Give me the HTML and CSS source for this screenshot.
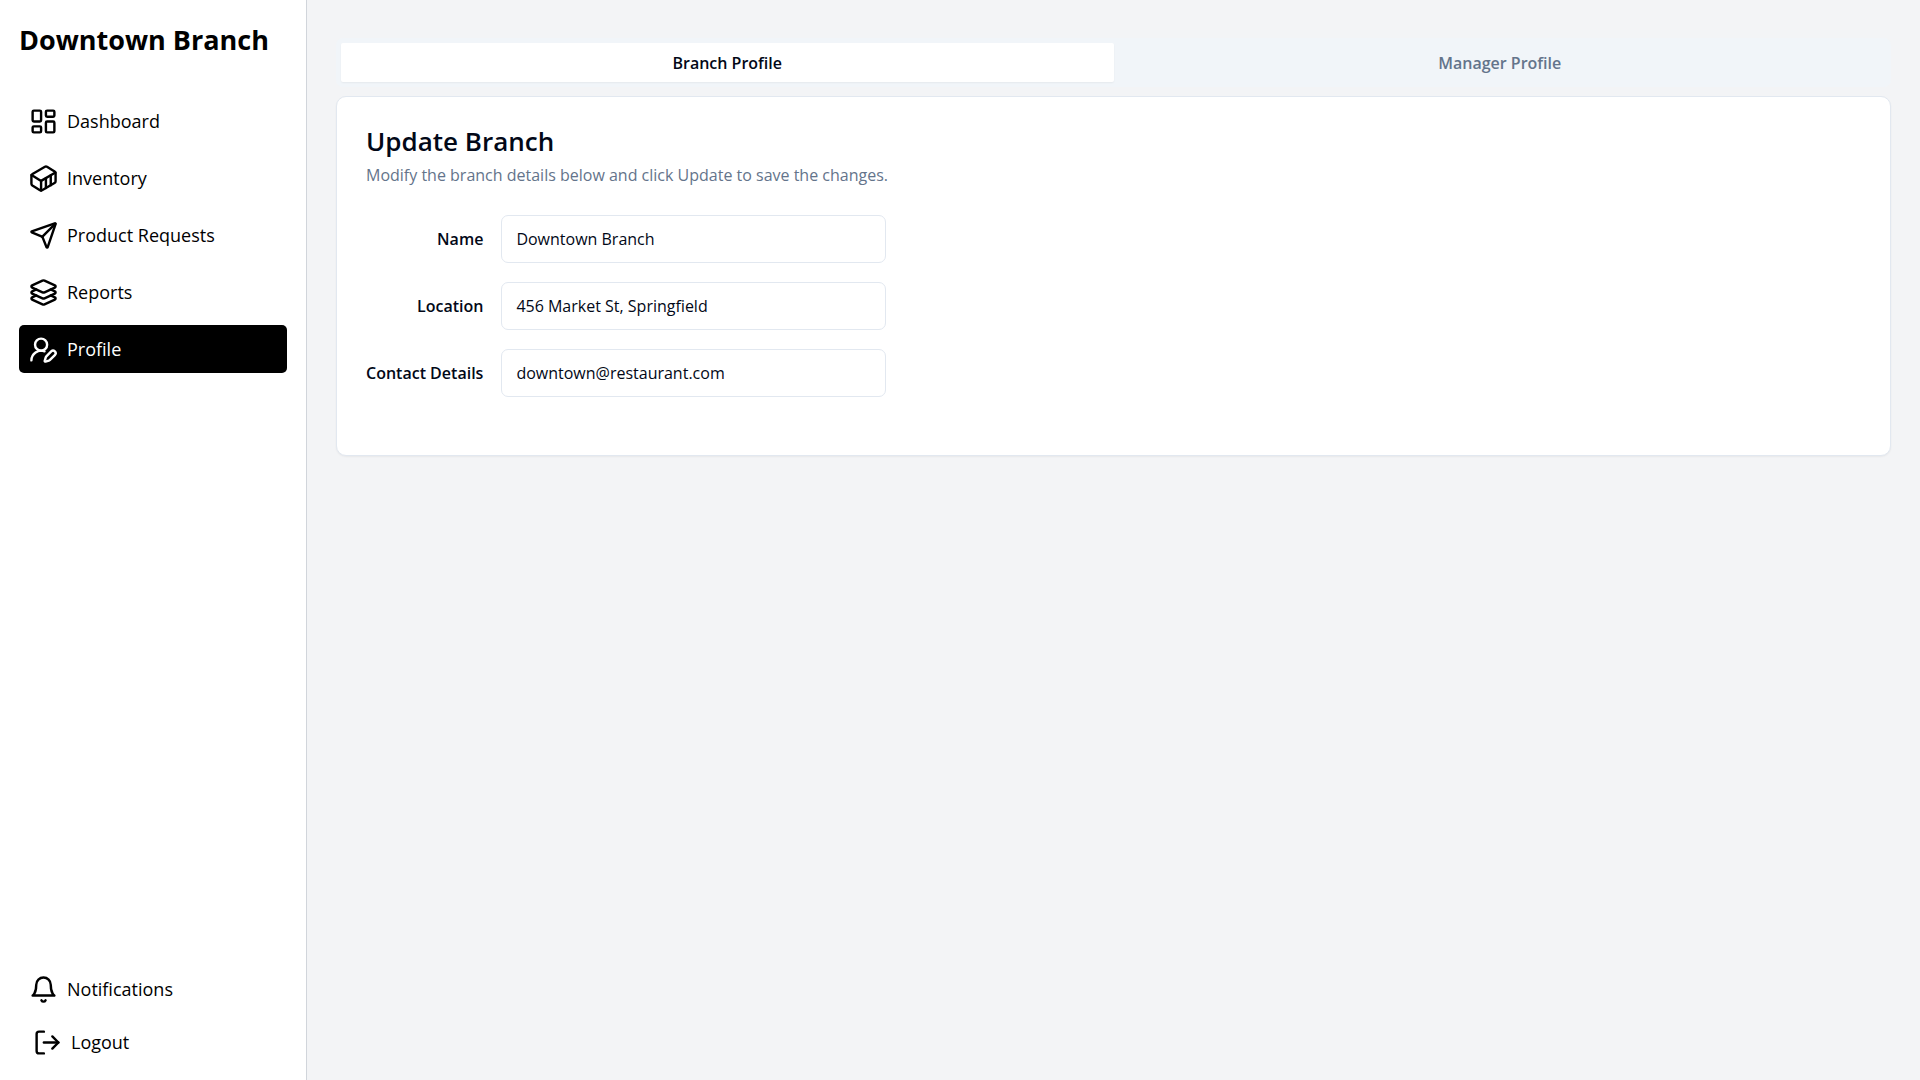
FILE: index.html
```html
<!DOCTYPE html>
<html lang="en">
<head>
<meta charset="utf-8">
<meta name="viewport" content="width=device-width, initial-scale=1">
<title>Downtown Branch</title>
<link rel="stylesheet" href="styles.css">
</head>
<body>
<div class="app">
  <aside class="sidebar">
    <h1 class="brand">Downtown Branch</h1>
    <nav class="nav">
      <a class="nav-link" href="#dashboard">
        <svg class="icon" viewBox="0 0 24 24" aria-hidden="true"><rect width="7" height="9" x="3" y="3" rx="1"/><rect width="7" height="5" x="14" y="3" rx="1"/><rect width="7" height="9" x="14" y="12" rx="1"/><rect width="7" height="5" x="3" y="16" rx="1"/></svg>
        Dashboard
      </a>
      <a class="nav-link" href="#inventory">
        <svg class="icon" viewBox="0 0 24 24" aria-hidden="true"><path d="M22 7.7c0-.6-.4-1.2-.8-1.5l-6.3-3.9a1.72 1.72 0 0 0-1.7 0l-10.3 6c-.5.2-.9.8-.9 1.4v6.6c0 .5.4 1.2.8 1.5l6.3 3.9a1.72 1.72 0 0 0 1.7 0l10.3-6c.5-.3.9-1 .9-1.5Z"/><path d="M10 21.9V14L2.1 9.1"/><path d="m10 14 11.9-6.9"/><path d="M14 19.8v-8.1"/><path d="M18 17.5V9.4"/></svg>
        Inventory
      </a>
      <a class="nav-link" href="#requests">
        <svg class="icon" viewBox="0 0 24 24" aria-hidden="true"><path d="M14.536 21.686a.5.5 0 0 0 .937-.024l6.5-19a.496.496 0 0 0-.635-.635l-19 6.5a.5.5 0 0 0-.024.937l7.93 3.18a2 2 0 0 1 1.112 1.11z"/><path d="m21.854 2.147-10.94 10.939"/></svg>
        Product Requests
      </a>
      <a class="nav-link" href="#reports">
        <svg class="icon" viewBox="0 0 24 24" aria-hidden="true"><path d="M12.83 2.18a2 2 0 0 0-1.66 0L2.6 6.08a1 1 0 0 0 0 1.83l8.58 3.91a2 2 0 0 0 1.66 0l8.58-3.9a1 1 0 0 0 0-1.83Z"/><path d="m6.08 9.5-3.5 1.6a1 1 0 0 0 0 1.81l8.6 3.91a2 2 0 0 0 1.65 0l8.58-3.9a1 1 0 0 0 0-1.83l-3.5-1.59"/><path d="m6.08 14.5-3.5 1.6a1 1 0 0 0 0 1.81l8.6 3.91a2 2 0 0 0 1.65 0l8.58-3.9a1 1 0 0 0 0-1.83l-3.5-1.59"/></svg>
        Reports
      </a>
      <a class="nav-link nav-link-active" href="#profile" aria-current="page">
        <svg class="icon" viewBox="0 0 24 24" aria-hidden="true"><path d="M2 21a8 8 0 0 1 10.821-7.487"/><path d="M21.378 16.626a1 1 0 0 0-3.004-3.004l-4.01 4.012a2 2 0 0 0-.506.854l-.837 2.87a.5.5 0 0 0 .62.62l2.87-.837a2 2 0 0 0 .854-.506z"/><circle cx="10" cy="8" r="5"/></svg>
        Profile
      </a>
    </nav>
    <div class="nav-footer">
      <a class="nav-link" href="#notifications">
        <svg class="icon" viewBox="0 0 24 24" aria-hidden="true"><path d="M6 8a6 6 0 0 1 12 0c0 7 3 9 3 9H3s3-2 3-9"/><path d="M10.3 21a1.94 1.94 0 0 0 3.4 0"/></svg>
        Notifications
      </a>
      <button class="logout" type="button">
        <svg class="icon" viewBox="0 0 24 24" aria-hidden="true"><path d="M9 21H5a2 2 0 0 1-2-2V5a2 2 0 0 1 2-2h4"/><path d="m16 17 5-5-5-5"/><path d="M21 12H9"/></svg>
        Logout
      </button>
    </div>
  </aside>
  <main class="main">
    <div class="tabs" role="tablist">
      <button class="tab tab-active" type="button" role="tab" aria-selected="true">Branch Profile</button>
      <button class="tab" type="button" role="tab" aria-selected="false">Manager Profile</button>
    </div>
    <section class="card">
      <h2 class="card-title">Update Branch</h2>
      <p class="card-text">Modify the branch details below and click Update to save the changes.</p>
      <form class="form">
        <label class="label" for="name">Name</label>
        <input class="input" id="name" type="text" value="Downtown Branch">
        <label class="label" for="location">Location</label>
        <input class="input" id="location" type="text" value="456 Market St, Springfield">
        <label class="label" for="contact">Contact Details</label>
        <input class="input" id="contact" type="text" value="downtown@restaurant.com">
      </form>
    </section>
  </main>
</div>
</body>
</html>
```
FILE: styles.css
```css
* {
  box-sizing: border-box;
}

body {
  margin: 0;
  background: #f3f4f6;
  color: #020817;
  font-family: "Open Sans", "Noto Sans", sans-serif;
}

button,
input {
  font: inherit;
  color: inherit;
}

.app {
  display: flex;
  min-height: 100vh;
}

.sidebar {
  display: flex;
  flex-direction: column;
  flex: none;
  width: 307px;
  padding: 19px 19px 14px;
  border-right: 1px solid #d1d5db;
  background: #fff;
  color: #000;
}

.brand {
  margin: 0 0 36px;
  font-size: 27px;
  font-weight: 700;
  line-height: 42px;
  white-space: nowrap;
}

.nav {
  display: flex;
  flex-direction: column;
  gap: 9px;
}

.nav-link,
.logout {
  display: flex;
  align-items: center;
  gap: 9px;
  height: 48px;
  padding: 0 10px;
  border-radius: 5px;
  color: inherit;
  font-size: 18px;
  line-height: 28px;
  text-decoration: none;
}

.nav-link-active {
  background: #000;
  color: #fff;
}

.nav-footer {
  display: flex;
  flex-direction: column;
  gap: 5px;
  margin-top: auto;
}

.logout {
  padding: 0 14px;
  border: 0;
  background: none;
}

.icon {
  flex: none;
  width: 29px;
  height: 29px;
  fill: none;
  stroke: currentColor;
  stroke-width: 2;
  stroke-linecap: round;
  stroke-linejoin: round;
}

.main {
  flex: 1;
  min-width: 0;
  padding: 38px 29px;
}

.tabs {
  display: grid;
  grid-template-columns: 1fr 1fr;
  margin-bottom: 9px;
  padding: 5px;
  border-radius: 7px;
  background: #f1f5f9;
}

.tab {
  height: 39px;
  padding: 0 14px;
  border: 0;
  border-radius: 2px;
  background: none;
  color: #64748b;
  font-size: 16px;
  font-weight: 600;
  line-height: 24px;
}

.tab-active {
  background: #fff;
  color: #020817;
  box-shadow: 0 1px 2px rgba(0, 0, 0, 0.05);
}

.card {
  padding: 29px 29px 58px;
  border: 1px solid #e2e8f0;
  border-radius: 10px;
  background: #fff;
  box-shadow: 0 1px 2px rgba(0, 0, 0, 0.05);
}

.card-title {
  margin: 0 0 6px;
  font-size: 26px;
  font-weight: 600;
  line-height: 31px;
}

.card-text {
  margin: 0 0 28px;
  color: #64748b;
  font-size: 16px;
  line-height: 24px;
}

.form {
  display: grid;
  grid-template-columns: max-content 385px;
  align-items: center;
  gap: 19px 18px;
}

.label {
  font-size: 16px;
  font-weight: 600;
  line-height: 24px;
  text-align: right;
}

.input {
  width: 100%;
  height: 48px;
  padding: 0 14px;
  border: 1px solid #e2e8f0;
  border-radius: 7px;
  background: #fff;
  font-size: 16px;
}
```
